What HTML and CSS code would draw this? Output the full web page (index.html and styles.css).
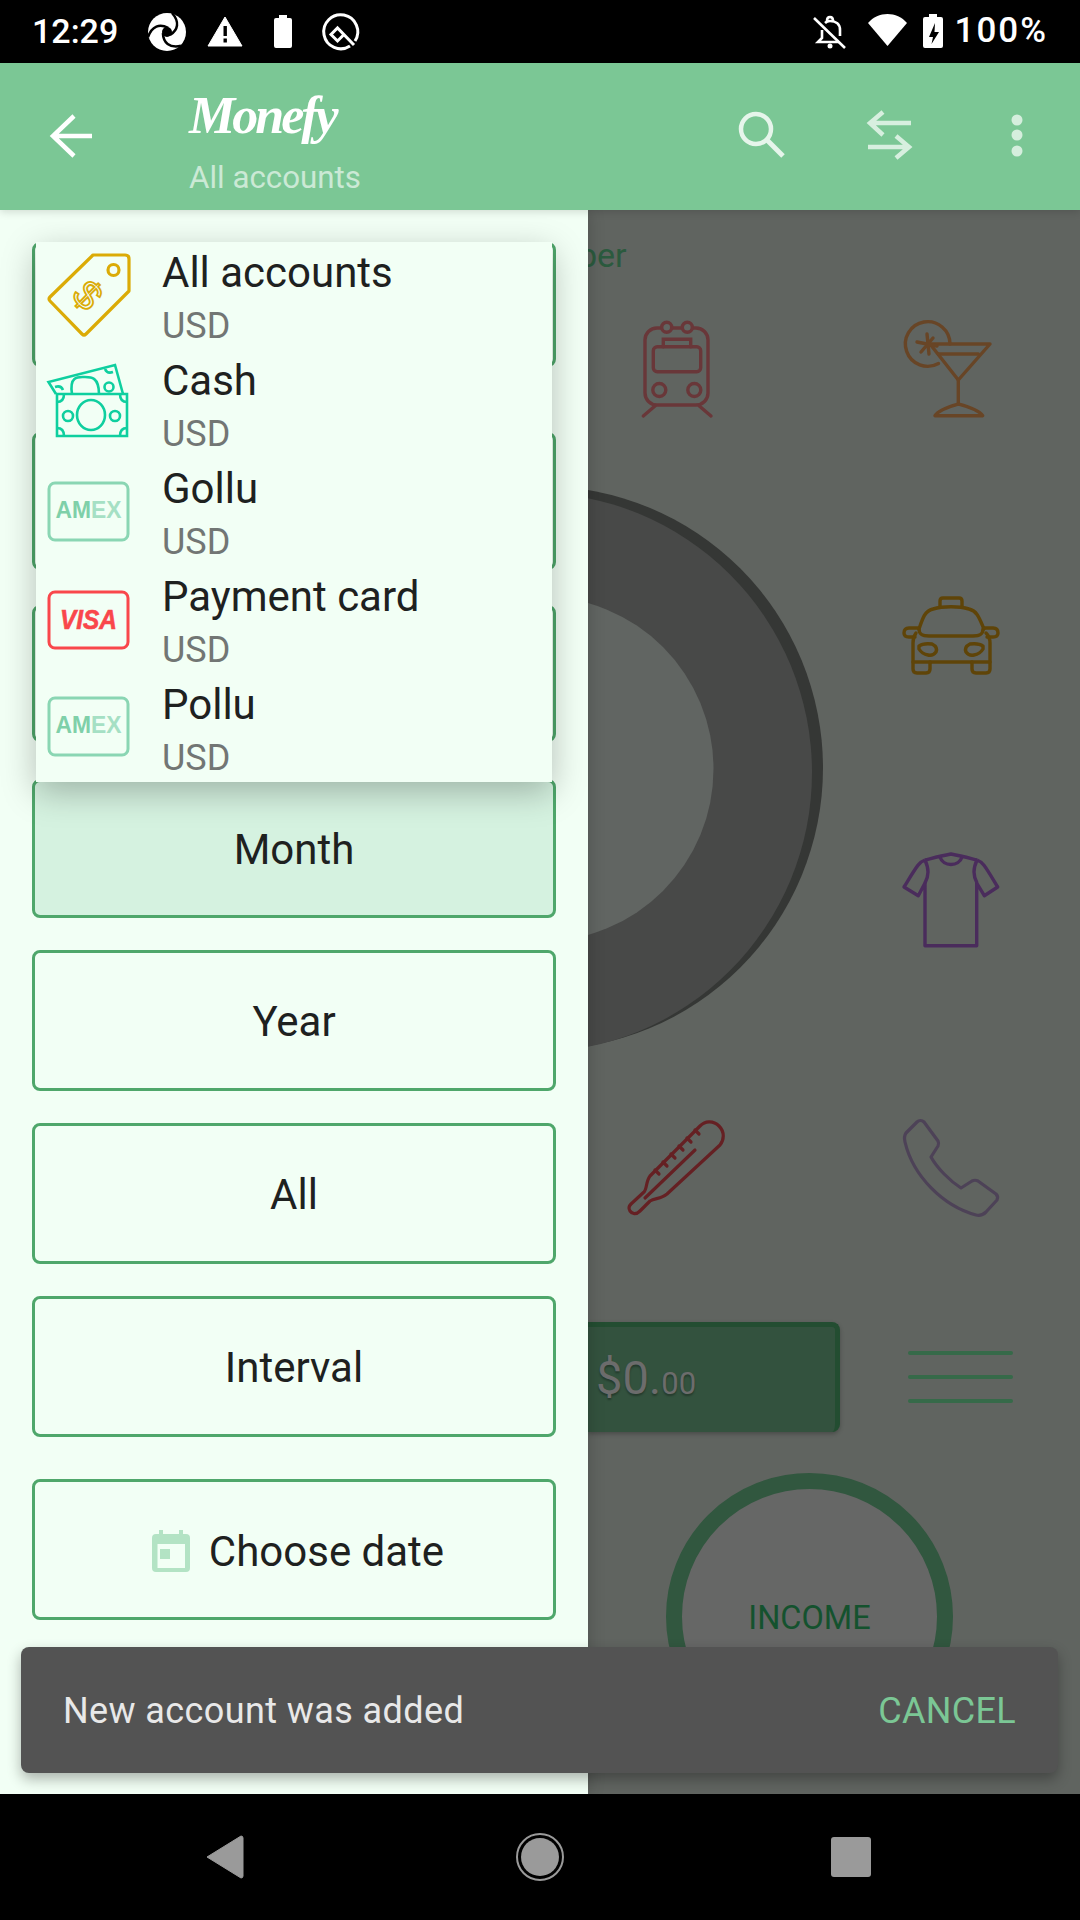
FILE: index.html
```html
<!DOCTYPE html>
<html lang="en">
<head>
<meta charset="utf-8">
<title>Monefy</title>
<link rel="stylesheet" href="styles.css">
</head>
<body>
<div class="phone">
  <header class="statusbar">
    <span class="time">12:29</span>
    <svg class="si si-first" viewBox="0 0 48 48"><circle cx="24" cy="24" r="19" fill="#fff"/><g fill="none" stroke="#000" stroke-width="2.5"><path d="M29 5C37 14 35 22 27 27"/><path d="M29 5C37 14 35 22 27 27" transform="rotate(120 24 24)"/><path d="M29 5C37 14 35 22 27 27" transform="rotate(240 24 24)"/></g><circle cx="24" cy="24" r="5" fill="#000"/></svg>
    <svg class="si" viewBox="0 0 48 48"><path d="M24 9L41 38H7Z" fill="#fff" stroke="#fff" stroke-linejoin="round"/><rect x="22.5" y="18" width="3.4" height="10" fill="#000"/><rect x="22.5" y="30.5" width="3.4" height="4" fill="#000"/></svg>
    <svg class="si" viewBox="0 0 48 48"><path d="M20 7h8v3h3a2 2 0 0 1 2 2v26a2 2 0 0 1-2 2H17a2 2 0 0 1-2-2V12a2 2 0 0 1 2-2h3Z" fill="#fff"/></svg>
    <svg class="si" viewBox="0 0 48 48"><g fill="none" stroke="#fff" stroke-width="3"><path d="M33 38A17 17 0 1 1 38 33"/><path d="M37 37L20.5 20L14 26.5L20.5 33L27 26.5"/></g></svg>
    <span class="status-spacer"></span>
    <svg class="si" viewBox="0 0 48 48"><g fill="none" stroke="#fff" stroke-width="2.6"><path d="M9 10L40 40"/><path d="M17 22V30L13 34H34M35 28V22C35 16 31 13 25 13C23 13 21 14 20 15"/><path d="M22 13C22 10 23 9 25 9S28 10 28 13"/></g><circle cx="25" cy="38" r="2.5" fill="#fff"/></svg>
    <svg class="si" viewBox="0 0 48 48"><path d="M5 15C15 3 34 3 44 15L24.5 38Z" fill="#fff"/></svg>
    <svg class="si si-batt" viewBox="0 0 24 48"><path d="M8 6h8v3h4a2 2 0 0 1 2 2v27a2 2 0 0 1-2 2H4a2 2 0 0 1-2-2V11a2 2 0 0 1 2-2h4Z" fill="#fff"/><path d="M14 15L8 29H12L10.5 36L18 24H13.5Z" fill="#000"/></svg>
    <span class="pct">100%</span>
  </header>

  <header class="toolbar">
    <div class="tb-back"><svg class="tb-back-icon" viewBox="0 0 56 56"><path d="M46 28H7M28 8L7 28L28 48" fill="none" stroke="#fff" stroke-width="4.5"/></svg></div>
    <div class="tb-title">
      <span class="logo">Monefy</span>
      <span class="subtitle">All accounts</span>
    </div>
    <div class="tb-actions">
      <svg class="tb-icon" viewBox="0 0 56 56"><circle cx="20" cy="21" r="15" fill="none" stroke="#e6f5eb" stroke-width="4.5"/><path d="M31 32L47 48" stroke="#e6f5eb" stroke-width="5"/></svg>
      <svg class="tb-icon" viewBox="0 0 56 56"><g fill="none" stroke="#d7efdf" stroke-width="4.5"><path d="M49 15H8M21 4L8 15L21 27"/><path d="M6 39H47M34 28L47 39L34 50"/></g></svg>
      <svg class="tb-icon" viewBox="0 0 56 56"><g fill="#d5eedd"><circle cx="29" cy="12" r="5.5"/><circle cx="29" cy="27" r="5.5"/><circle cx="29" cy="43" r="5.5"/></g></svg>
    </div>
  </header>

  <main class="main">
    <aside class="drawer">
      <div class="btn btn-first"></div>
      <div class="btn btn-second"></div>
      <div class="btn btn-third"></div>
      <div class="btn btn-month">Month</div>
      <div class="btn">Year</div>
      <div class="btn">All</div>
      <div class="btn">Interval</div>
      <div class="btn btn-date">
        <svg class="cal" viewBox="0 0 38 42"><path d="M7 0h4v4h16V0h4v4h3a4 4 0 0 1 4 4v30a4 4 0 0 1-4 4H4a4 4 0 0 1-4-4V8a4 4 0 0 1 4-4h3Z" fill="#b3e3c4"/><rect x="5.5" y="14" width="27.5" height="24" fill="#f2fff5"/><rect x="8" y="19" width="10" height="10" fill="#b3e3c4"/></svg>
        <span>Choose date</span>
      </div>

      <div class="popup">
        <div class="row">
          <svg class="acc-icon" viewBox="0 0 84 84"><g fill="none" stroke="#dbab06" stroke-width="3.2" stroke-linejoin="round"><path d="M46 2H78Q82 2 82 6V38L39 81Q37 83 35 81L3 48Q1 46 3 44Z"/><circle cx="66.500" cy="17" r="5.500"/></g><text class="tag-dollar" x="0" y="14" transform="translate(41 42) rotate(45)" text-anchor="middle">$</text></svg>
          <div class="acc-text"><span class="acc-name">All accounts</span><span class="acc-cur">USD</span></div>
        </div>
        <div class="row">
          <svg class="acc-icon" viewBox="0 0 84 84"><g fill="none" stroke="#0fcf9f" stroke-width="2.6"><path d="M9 33L1.500 21L68 4L76 33"/><path d="M16 29Q14 24 8 26M58 8Q60 13 66 11"/><path d="M25 33C22 14 32 16 38 16S52 16 52 33"/><circle cx="62" cy="26" r="4.500"/><path d="M10 33V75H80V33Z" fill="#f2fff5"/><path d="M10 41Q17 41 17 33M80 41Q73 41 73 33M10 67Q17 67 17 75M80 67Q73 67 73 75"/><ellipse cx="44" cy="54" rx="14" ry="15"/><circle cx="21" cy="55" r="5"/><circle cx="68" cy="55" r="5"/></g></svg>
          <div class="acc-text"><span class="acc-name">Cash</span><span class="acc-cur">USD</span></div>
        </div>
        <div class="row">
          <svg class="acc-icon" viewBox="0 0 84 84"><rect x="2" y="14" width="79" height="57" rx="6" fill="none" stroke="#8ad6b3" stroke-width="3"/><text class="amex" x="8.500" y="49" textLength="66" lengthAdjust="spacingAndGlyphs">AM<tspan class="amex-light">EX</tspan></text></svg>
          <div class="acc-text"><span class="acc-name">Gollu</span><span class="acc-cur">USD</span></div>
        </div>
        <div class="row">
          <svg class="acc-icon" viewBox="0 0 84 84"><rect x="2" y="15" width="79" height="56" rx="6" fill="none" stroke="#f9474b" stroke-width="3"/><text class="visa" x="13" y="52" textLength="57" lengthAdjust="spacingAndGlyphs">VISA</text></svg>
          <div class="acc-text"><span class="acc-name">Payment card</span><span class="acc-cur">USD</span></div>
        </div>
        <div class="row">
          <svg class="acc-icon" viewBox="0 0 84 84"><rect x="2" y="13" width="79" height="57" rx="6" fill="none" stroke="#8ad6b3" stroke-width="3"/><text class="amex" x="8.500" y="48" textLength="66" lengthAdjust="spacingAndGlyphs">AM<tspan class="amex-light">EX</tspan></text></svg>
          <div class="acc-text"><span class="acc-name">Pollu</span><span class="acc-cur">USD</span></div>
        </div>
      </div>
    </aside>

    <section class="panel">
      <svg class="donut" viewBox="588 480 492 600"><circle cx="541" cy="768" r="282" fill="#353735"/><circle cx="532" cy="772.500" r="280" fill="#484948"/><circle cx="541" cy="769" r="172.500" fill="#616562"/></svg>
      <div class="period">ber</div>
      <div class="cats">
        <svg class="cat" viewBox="0 0 96 96"><g fill="none" stroke="#693739" stroke-width="3.400" stroke-linecap="round"><rect x="16" y="8" width="63" height="77" rx="12"/><circle cx="37.700" cy="7.300" r="5" fill="#616562"/><circle cx="58.300" cy="7.300" r="5" fill="#616562"/><rect x="24.300" y="26.700" width="47.400" height="25" rx="4"/><path d="M34.300 26.700V19.300H61.700V26.700"/><circle cx="30.300" cy="70" r="6.500"/><circle cx="65.300" cy="70" r="6.500"/><path d="M26 86L14.300 96M70.300 86L82 96"/></g></svg>
        <svg class="cat" viewBox="0 0 96 96"><g fill="none" stroke="#684526" stroke-width="3.400" stroke-linecap="round" stroke-linejoin="round"><path d="M35.500 43.500A22.300 22.300 0 1 1 47 24"/><path d="M27 24H87L55.300 60Z"/><path d="M35.300 34H75.300"/><path d="M55.300 60V84"/><path d="M32 95.700C36 89 48 86 55.300 84C63 86 75 89 79.700 95.700Z"/><path d="M24 14L26 34M14 22L34 26M18 32L30 18"/></g></svg>
        <span class="cat"></span>
        <svg class="cat" viewBox="0 0 96 96"><g fill="none" stroke="#5f4408" stroke-width="3.400" stroke-linecap="round" stroke-linejoin="round"><path d="M37 20V14Q37 11 40 11H56Q59 11 59 14V20"/><path d="M16 42C20 30 22 24 30 22C40 19 56 19 66 22C74 24 76 30 81 42"/><path d="M16 42C16 48 20 49 26 49H70C76 49 80 48 80 42"/><path d="M15 41H6Q1 41 1 46Q1 50 6 50H12"/><path d="M81 41H90Q95 41 95 46Q95 50 90 50H84"/><path d="M13 46Q10 50 10 56V82Q10 86 14 86H23Q27 86 27 82V75H69V82Q69 86 73 86H83Q87 86 87 82V56Q87 50 83 46"/><path d="M10 75H27M69 75H87"/><path d="M16 59Q20 56 29 57Q35 60 33 65Q30 69 25 68Q19 67 16 62Z"/><path d="M80 59Q76 56 67 57Q61 60 63 65Q66 69 71 68Q77 67 80 62Z"/></g></svg>
        <span class="cat"></span>
        <svg class="cat" viewBox="0 0 96 96"><g fill="none" stroke="#4a2c5c" stroke-width="3.400" stroke-linejoin="round"><path d="M22 7C30 5 37 3 48 1C59 3 66 5 74 7"/><path d="M22 7C16 9 14 13 1 34L15.300 42.700L22 30V92.700H73.700V30L81.300 42.700L94.700 34C82 13 80 9 74 7"/><path d="M22 7C26 16 26 22 22 30M74 7C70 16 70 22 74 30"/><path d="M37 4C40 14 56 14 59 4"/></g></svg>
        <svg class="cat" viewBox="0 0 96 96"><g fill="none" stroke="#652023" stroke-width="3.200" stroke-linecap="round" stroke-linejoin="round"><path d="M71 6C76 1 84 0 90 6C96 12 95 20 91 25L38 74C32 79 26 78 21 81L11 91C7 95 3 94 1 91C-1 88 0 86 2 84L15 72C18 69 17 61 21 56Z"/><path d="M16 78L66 30"/><path d="M66 10L70 14M58 18L62 22M50 26L54 30M42 34L46 38M34 42L38 46M26 50L30 54"/></g></svg>
        <svg class="cat" viewBox="0 0 96 96"><path d="M14 2C16 0 19 0 21 2L35 21C36 23 36 24 35 26L28 37C34 48 47 61 58 68L69 61C71 60 73 60 75 61L93 74C95 76 95 78 94 80L83 92C80 95 77 96 73 95C40 86 10 56 2 22C1 18 1 16 3 13Z" fill="none" stroke="#4d4257" stroke-width="3.200" stroke-linejoin="round"/></svg>
      </div>
      <div class="balance-row">
        <div class="balance"><span class="bal-big">$0.</span><span class="bal-small">00</span></div>
        <div class="burger"><span></span><span></span><span></span></div>
      </div>
      <div class="income">INCOME</div>
    </section>

    <div class="snackbar">
      <span class="snack-text">New account was added</span>
      <span class="snack-action">CANCEL</span>
    </div>
  </main>

  <nav class="navbar">
    <svg class="nav-icon" viewBox="0 0 48 48"><path d="M4 24L38 3Q40 3 40 5V43Q40 45 38 45Z" fill="#9a9a9a" stroke="#9a9a9a" stroke-linejoin="round"/></svg>
    <svg class="nav-icon" viewBox="0 0 48 48"><circle cx="24" cy="24" r="23" fill="none" stroke="#9a9a9a" stroke-width="2"/><circle cx="24" cy="24" r="19" fill="#9a9a9a"/></svg>
    <svg class="nav-icon" viewBox="0 0 48 48"><rect x="2" y="4" width="40" height="40" rx="3" fill="#9a9a9a"/></svg>
  </nav>
</div>
</body>
</html>
```

FILE: styles.css
```css
* { box-sizing: border-box; }
html, body { margin: 0; padding: 0; }
body { width: 1080px; height: 1920px; overflow: hidden; background: #000; font-family: Roboto, "Liberation Sans", sans-serif; }
.phone { width: 1080px; height: 1920px; display: flex; flex-direction: column; }

/* Status bar */
.statusbar { flex: 0 0 63px; height: 63px; background: #000; color: #fff; display: flex; align-items: flex-start; padding: 8px 32px 0 32px; gap: 10px; }
.time, .pct { font-size: 34px; font-weight: 500; line-height: 44px; height: 44px; padding-top: 1px; }
.pct { font-size: 35px; letter-spacing: 2px; }
.si { width: 48px; height: 48px; flex: none; }
.si-first { margin-left: 15px; }
.si-batt { width: 24px; }
.status-spacer { flex: 1; }

/* Toolbar */
.toolbar { flex: 0 0 147px; height: 147px; background: #7bc795; display: flex; align-items: stretch; position: relative; z-index: 3; box-shadow: 0 2px 8px rgba(0,0,0,.14); }
.tb-back { width: 189px; padding: 45px 0 0 46px; }
.tb-back-icon { width: 56px; height: 56px; display: block; }
.tb-title { display: flex; flex-direction: column; }
.logo { font-family: "Liberation Serif", serif; font-weight: 700; font-style: italic; font-size: 52px; letter-spacing: -3px; line-height: 52px; color: #fff; margin-top: 27px; }
.subtitle { font-size: 31.3px; line-height: 38px; color: #cbe9d5; margin-top: 17px; }
.tb-actions { margin-left: auto; display: flex; gap: 70px; padding: 45px 36px 0 0; align-items: flex-start; }
.tb-icon { width: 56px; height: 56px; display: block; }

/* Main */
.main { flex: 1; display: flex; position: relative; min-height: 0; }
.drawer { flex: 0 0 588px; width: 588px; background: #f2fff5; padding: 32px 32px 0; display: flex; flex-direction: column; position: relative; z-index: 2; box-shadow: 0 0 16px rgba(0,0,0,.2); }
.btn { height: 141px; margin-top: 32px; padding-top: 2px; flex: none; border: 3px solid #4fa76b; border-radius: 8px; display: flex; align-items: center; justify-content: center; font-size: 42px; color: #1e211f; }
.btn-first { height: 125px; margin-top: 0; }
.btn-second { height: 138px; margin-top: 65px; }
.btn-third { height: 137px; margin-top: 35px; }
.btn-month { height: 139px; margin-top: 37px; background: #d5f2e0; }
.btn-date { margin-top: 42px; gap: 19px; padding: 3px 0 0 8px; }
.cal { width: 38px; height: 42px; flex: none; }

.popup { position: absolute; left: 36px; top: 32px; width: 516px; height: 540px; background: #f2fff5; box-shadow: 0 10px 32px rgba(0,0,0,.26); display: flex; flex-direction: column; }
.row { flex: 0 0 108px; height: 108px; display: flex; gap: 31px; padding: 11px 0 0 11px; align-items: flex-start; }
.acc-icon { width: 84px; height: 84px; flex: none; overflow: visible; }
.acc-text { display: flex; flex-direction: column; margin-top: -5px; gap: 8px; }
.acc-name { font-size: 42px; line-height: 49px; color: #1e211f; }
.acc-cur { font-size: 36px; line-height: 42px; color: #727674; }
.tag-dollar { font-family: "Liberation Sans", sans-serif; font-size: 40px; fill: none; stroke: #dbab06; stroke-width: 1.8px; }
.amex { font-family: "Liberation Sans", sans-serif; font-weight: 700; font-size: 23px; fill: #7fd0a9; }
.amex-light { fill: #a5e0c4; }
.visa { font-family: "Liberation Sans", sans-serif; font-weight: 700; font-style: italic; font-size: 27px; fill: #f9474b; stroke: #f9474b; stroke-width: .6px; }

/* Right panel behind the scrim */
.panel { flex: 1; background: #606460; position: relative; overflow: hidden; display: flex; flex-direction: column; padding-top: 25px; }
.donut { position: absolute; left: 0; top: 270px; width: 492px; height: 600px; }
.period { font-size: 34px; line-height: 40px; height: 40px; color: #2b5a3e; margin-left: -10px; }
.cats { position: relative; margin-top: 45px; padding-left: 41px; display: grid; grid-template-columns: 96px 96px; column-gap: 178px; row-gap: 170.67px; }
.cat { width: 96px; height: 96px; display: block; overflow: visible; }
.balance-row { display: flex; align-items: center; margin-top: 106px; gap: 68px; position: relative; }
.balance { width: 252px; height: 110px; background: #33523e; border-top: 5px solid #234d31; border-right: 5px solid #234d31; border-radius: 0 8px 8px 0; box-shadow: 0 2px 4px rgba(0,0,0,.25); padding: 24px 0 0 8px; color: #6c6c6c; text-shadow: 0 2px 2px rgba(0,0,0,.3); line-height: 54px; white-space: nowrap; }
.bal-big { font-size: 47px; }
.bal-small { font-size: 31px; }
.burger { width: 105px; display: flex; flex-direction: column; gap: 20px; }
.burger span { height: 4px; background: #366a49; border-radius: 2px; display: block; }
.income { width: 287px; height: 287px; margin: 41px 0 0 78px; padding-top: 3px; flex: none; border: 16px solid #31573f; border-radius: 50%; background: #666766; display: flex; align-items: center; justify-content: center; font-size: 32.5px; color: #14522e; position: relative; }

.snackbar { position: absolute; left: 21px; top: 1437px; width: 1037px; height: 126px; background: #535353; border-radius: 8px; box-shadow: 0 6px 14px rgba(0,0,0,.3); z-index: 4; display: flex; align-items: center; justify-content: space-between; padding: 2px 42px 0; font-size: 36px; }
.snack-text { color: #e8e8e8; letter-spacing: .4px; }
.snack-action { color: #7bc795; font-size: 36px; letter-spacing: .3px; }

/* Nav bar */
.navbar { flex: 0 0 126px; height: 126px; background: #000; display: flex; align-items: center; gap: 265px; padding: 0 0 0 203px; }
.nav-icon { width: 48px; height: 48px; flex: none; }
```
